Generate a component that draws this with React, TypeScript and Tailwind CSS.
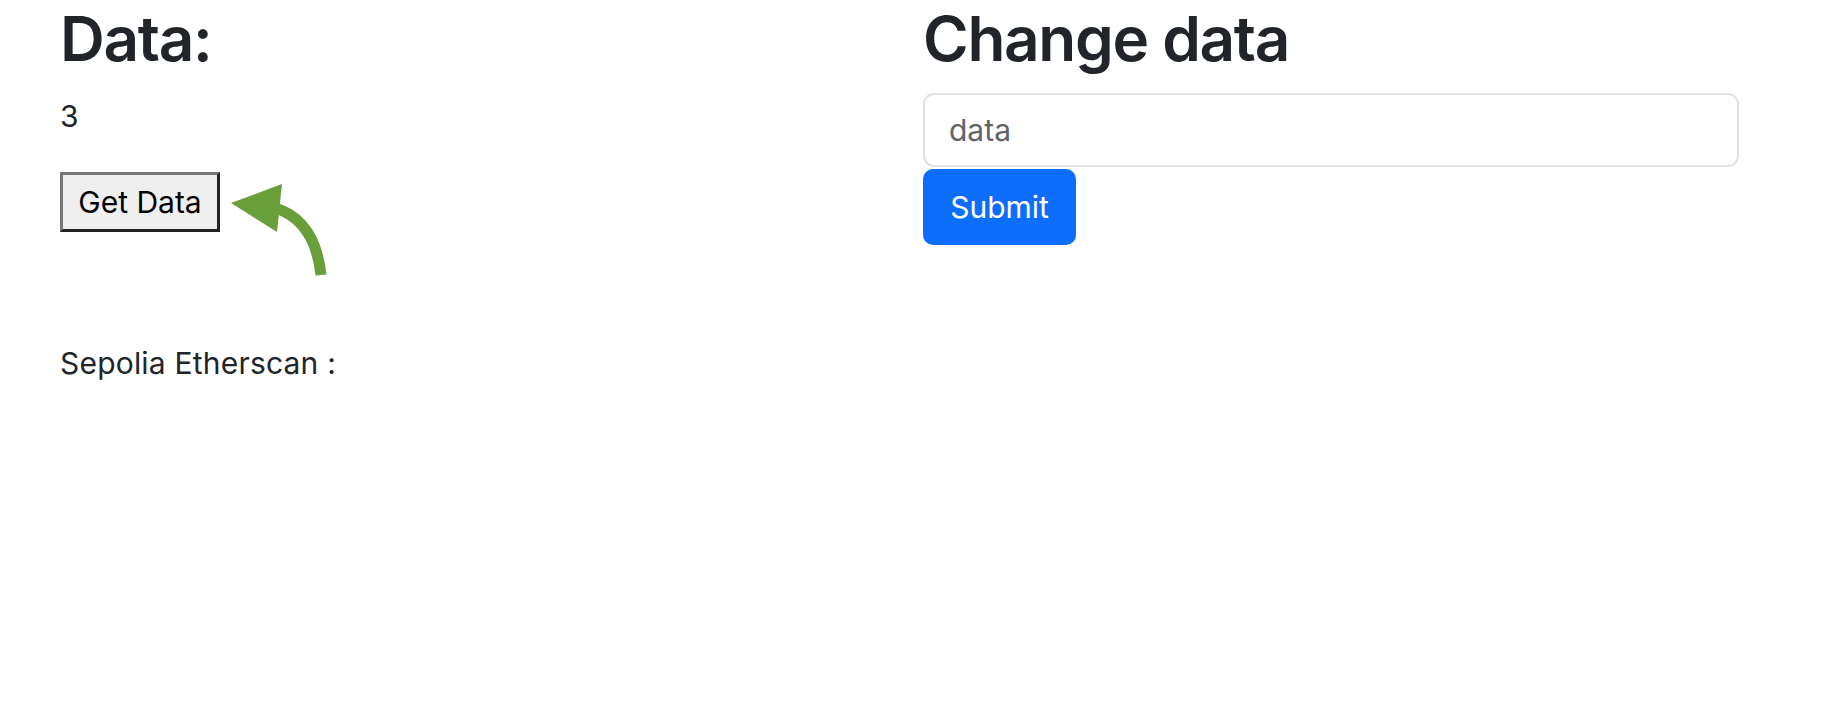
const base = "font-['Inter','Noto_Sans',sans-serif] text-[#212529]";

function CurvedArrow() {
  return (
    <svg
      className="absolute left-[171px] top-[12px]"
      width="96"
      height="92"
      viewBox="0 0 96 92"
      fill="none"
    >
      <path d="M44 24 Q84 36 90 91" stroke="#689f38" strokeWidth="11" />
      <polygon points="0,19 51,0 46,48" fill="#689f38" />
    </svg>
  );
}

export default function App() {
  return (
    <div className={`${base} min-h-[714px] bg-white`}>
      <div className="ml-[60px] grid grid-cols-[816px_816px] gap-x-[47px] pt-[2px]">
        <section>
          <h1 className="text-[62px] leading-[1.2] font-semibold tracking-[-1.3px]">Data:</h1>
          <p className="mt-[18px] text-[30px] leading-[1.5]">3</p>
          <div className="relative mt-[33px]">
            <button className="flex h-[60px] w-[160px] items-center justify-center border-[3px] border-t-[#777777] border-l-[#777777] border-r-[#222222] border-b-[#222222] bg-[#efefef] text-[30px] text-black">
              Get Data
            </button>
            <CurvedArrow />
          </div>
          <p className="mt-[109px] text-[30px] leading-[1.5] tracking-[0.2px]">Sepolia Etherscan :</p>
        </section>

        <section>
          <h1 className="text-[62px] leading-[1.2] font-semibold tracking-[-1.3px]">Change data</h1>
          <form className="mt-[17px] flex flex-col items-start">
            <input
              className="h-[74px] w-full rounded-[11px] border-2 border-[#dee2e6] pl-[24px] pr-[22px] text-[30px] outline-none placeholder:text-[#5f6368]"
              placeholder="data"
            />
            <button
              type="button"
              className="mt-[2px] h-[76px] w-[153px] rounded-[10px] bg-[#0d6efd] text-[30px] text-white"
            >
              Submit
            </button>
          </form>
        </section>
      </div>
    </div>
  );
}
